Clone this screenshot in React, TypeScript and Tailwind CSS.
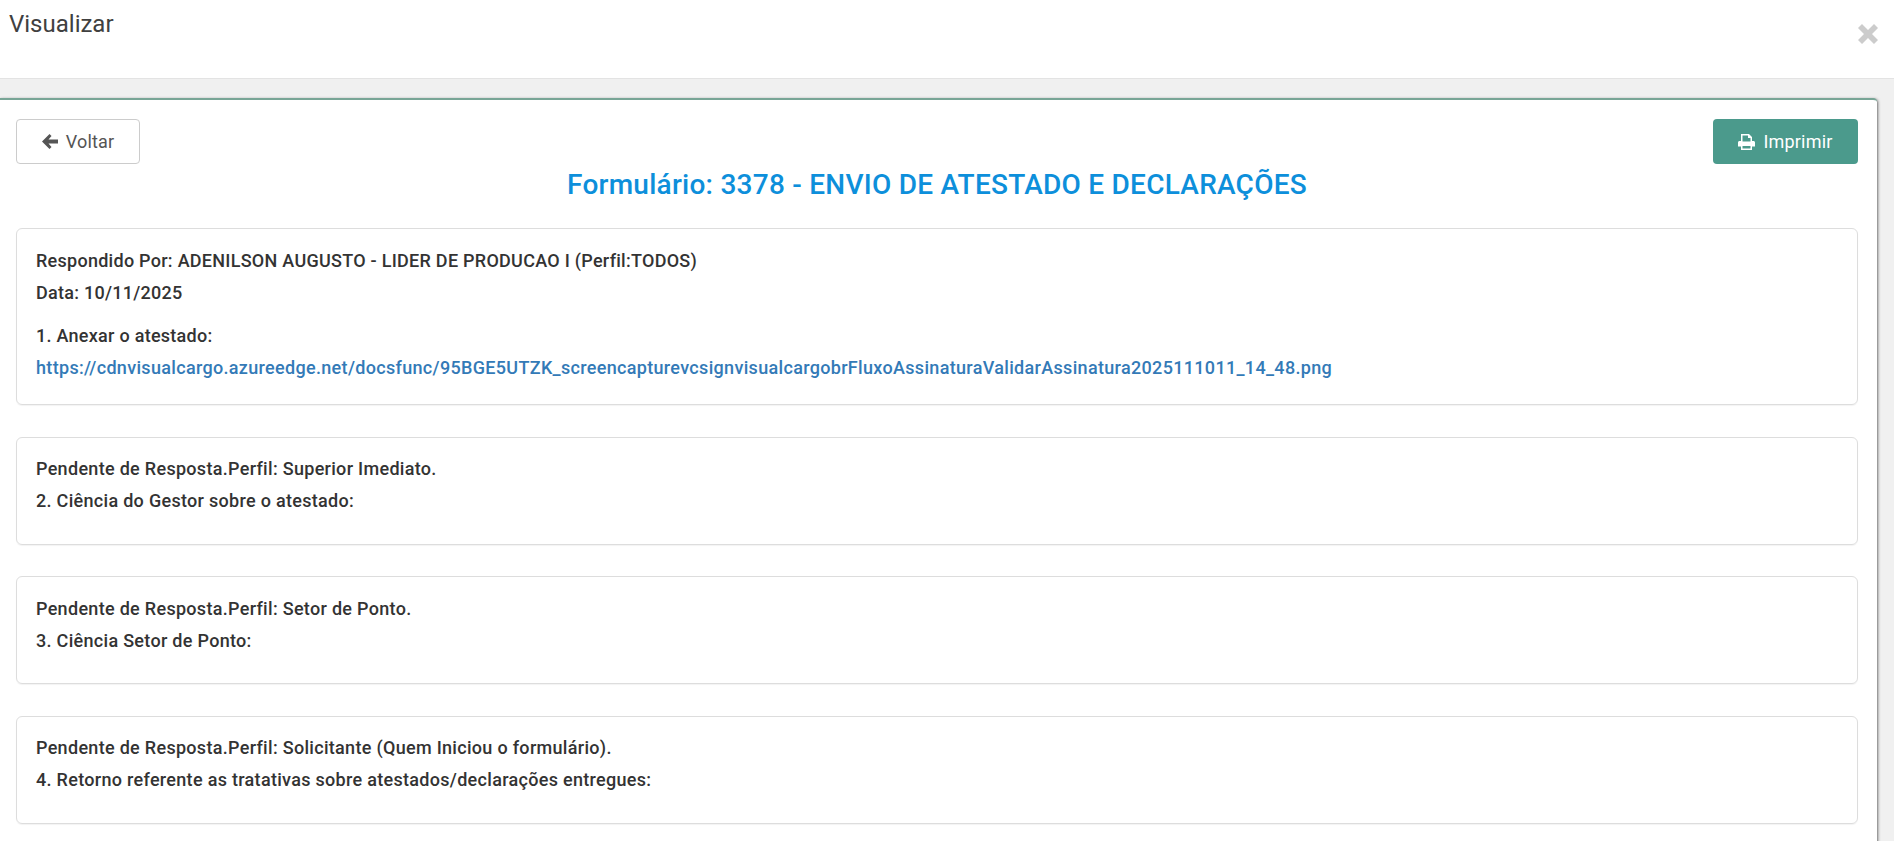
import React from 'react';

const pendentes = [
  { perfil: 'Pendente de Resposta.Perfil: Superior Imediato.', pergunta: '2. Ciência do Gestor sobre o atestado:' },
  { perfil: 'Pendente de Resposta.Perfil: Setor de Ponto.', pergunta: '3. Ciência Setor de Ponto:' },
  { perfil: 'Pendente de Resposta.Perfil: Solicitante (Quem Iniciou o formulário).', pergunta: '4. Retorno referente as tratativas sobre atestados/declarações entregues:' },
];

const App: React.FC = () => {
  return (
    <div className="h-screen overflow-hidden bg-[#f0f0f0] font-['Roboto',sans-serif] text-[#333333]">
      <div className="h-[79px] bg-white border-b border-[#e3e3e3] flex justify-between">
        <h4 className="pl-[9px] pt-[9px] text-[24px] leading-[30px] text-[#404040]">Visualizar</h4>
        <button className="mr-[16px] mt-[24px] h-[20px] text-[#cccccc]">
          <svg viewBox="0 0 20 20" className="w-[20px] h-[20px]" fill="currentColor">
            <path d="M4 0L10 6L16 0L20 4L14 10L20 16L16 20L10 14L4 20L0 16L6 10L0 4Z" />
          </svg>
        </button>
      </div>

      <div className="mt-[19px] mr-[17px] bg-white border-t-2 border-[#78a596] rounded-tr-[4px] shadow-[1px_1px_3px_rgba(0,0,0,0.55)] h-[760px] pl-[16px] pr-[19px] pt-[19px]">
        <div className="flex justify-between">
          <button className="w-[124px] h-[45px] rounded-[4px] border border-[#cccccc] bg-white text-[#555555] text-[18px] tracking-[0.2px] flex items-center justify-center gap-[8px]">
            <svg viewBox="0 0 16 15" className="w-[16px] h-[15px]" fill="currentColor">
              <path d="M7.5 0L9.5 2L6.5 5.5H16V9.5H6.5L9.5 13L7.5 15L0 7.5Z" />
            </svg>
            Voltar
          </button>
          <button className="w-[145px] h-[45px] rounded-[4px] bg-[#4b9a8c] text-white text-[18px] tracking-[0.2px] flex items-center justify-center gap-[8px]">
            <svg viewBox="0 0 17 16" className="w-[17px] h-[16px]" fill="currentColor">
              <path fillRule="evenodd" d="M3 0H11L14 3V7H15.5C16.3 7 17 7.7 17 8.5V12.5H14V16H3V12.5H0V8.5C0 7.7 .7 7 1.5 7H3ZM4.5 1.5V7.5H12.5V4H10V1.5ZM4.5 12V14.5H12.5V12Z" />
            </svg>
            Imprimir
          </button>
        </div>

        <h3 className="mt-[1px] text-center text-[28px] leading-[40px] tracking-[0.25px] font-medium text-[#0d8fdb]">
          Formulário: 3378 - ENVIO DE ATESTADO E DECLARAÇÕES
        </h3>

        <div className="mt-[23px] h-[177px] rounded-[6px] border border-[#dddddd] shadow-[0_1px_1px_rgba(0,0,0,0.05)] px-[19px] pt-[16px] text-[18px] leading-[32px] tracking-[0.27px] font-medium">
          <div>Respondido Por: ADENILSON AUGUSTO - LIDER DE PRODUCAO I (Perfil:TODOS)</div>
          <div>Data: 10/11/2025</div>
          <div className="mt-[11px]">1. Anexar o atestado:</div>
          <a href="#" className="block tracking-[0.32px] text-[#337ab7]">
            https://cdnvisualcargo.azureedge.net/docsfunc/95BGE5UTZK_screencapturevcsignvisualcargobrFluxoAssinaturaValidarAssinatura2025111011_14_48.png
          </a>
        </div>

        {pendentes.map((p) => (
          <div key={p.perfil} className="mt-[31.5px] h-[108px] rounded-[6px] border border-[#dddddd] shadow-[0_1px_1px_rgba(0,0,0,0.05)] px-[19px] pt-[15.5px] text-[18px] leading-[32px] tracking-[0.3px] font-medium">
            <div>{p.perfil}</div>
            <div>{p.pergunta}</div>
          </div>
        ))}
      </div>
    </div>
  );
};

export default App;
